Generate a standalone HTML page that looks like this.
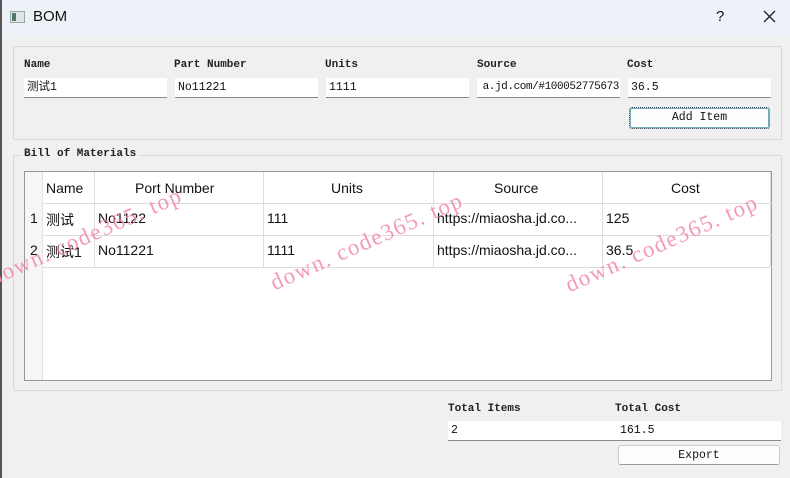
<!DOCTYPE html>
<html><head><meta charset="utf-8"><style>
*{box-sizing:border-box;margin:0;padding:0}
body{width:790px;height:478px;overflow:hidden;background:#f0f0f0;position:relative;font-family:"Liberation Mono","Noto Sans CJK SC",monospace;font-size:11px;color:#111}
.tb{position:absolute;left:0;top:0;width:790px;height:38px;background:#eef2f8}
.abs{position:absolute}
.lbl{position:absolute;font-size:11px;font-weight:bold;color:#222}
.in{position:absolute;height:20px;background:#fff;border-bottom:1px solid #888;padding-left:3px;line-height:19px;font-size:11.5px;white-space:nowrap;overflow:hidden}
.grp{position:absolute;border:1px solid #d8d8d8;border-radius:2px}
.btn{position:absolute;background:#fdfdfd;border:1px solid #ccc;border-bottom-color:#999;border-radius:3px;text-align:center;font-size:11.5px;line-height:19px}
.tbl{position:absolute;left:24px;top:171px;width:748px;height:210px;border:1px solid #999;background:#fff}
.cell{position:absolute;font-family:"Liberation Sans","Noto Sans CJK SC",sans-serif;font-size:14px;color:#111;white-space:nowrap}
.vl{position:absolute;top:0;width:1px;height:96px;background:#ddd}
.hl{position:absolute;left:17px;height:1px;width:730px;background:#ddd}
.wm{position:absolute;font-family:"Liberation Serif",serif;font-size:23px;color:#f28aa8;letter-spacing:1.5px;transform-origin:left bottom;transform:rotate(-24deg);white-space:nowrap;opacity:.85}
</style></head><body>
<div class="tb"></div>
<div class="abs" style="left:0;top:0;width:2px;height:478px;background:#555"></div>
<div class="abs" style="left:10px;top:11px;width:15px;height:12px;border:1px solid #9aa;background:#dfe6e6"></div>
<div class="abs" style="left:12px;top:13px;width:4px;height:8px;background:#576"></div>
<div class="abs" style="left:33px;top:8px;font-family:'Liberation Sans',sans-serif;font-size:15px">BOM</div>
<div class="abs" style="left:716px;top:8px;font-family:'Liberation Sans',sans-serif;font-size:15px">?</div>
<svg class="abs" style="left:763px;top:10px" width="13" height="13"><path d="M1 1L12 12M12 1L1 12" stroke="#222" stroke-width="1.3"/></svg>

<div class="grp" style="left:13px;top:46px;width:769px;height:94px"></div>
<div class="lbl" style="left:24px;top:59px">Name</div>
<div class="lbl" style="left:174px;top:59px">Part Number</div>
<div class="lbl" style="left:325px;top:59px">Units</div>
<div class="lbl" style="left:477px;top:59px">Source</div>
<div class="lbl" style="left:627px;top:59px">Cost</div>
<div class="in" style="left:24px;top:78px;width:143px">测试1</div>
<div class="in" style="left:175px;top:78px;width:143px">No11221</div>
<div class="in" style="left:326px;top:78px;width:143px">1111</div>
<div class="in" style="left:477px;top:78px;width:143px;padding-left:0;font-size:11px;letter-spacing:-0.4px;text-align:right;padding-right:1px">a.jd.com/#100052775673</div>
<div class="in" style="left:628px;top:78px;width:143px">36.5</div>
<div class="btn" style="left:629px;top:107px;width:141px;height:22px;border:1px dotted #234;border-radius:3px;box-shadow:inset 0 0 0 1px #7ab">Add Item</div>

<div class="grp" style="left:13px;top:155px;width:769px;height:236px"></div>
<div class="lbl" style="left:21px;top:148px;background:#f0f0f0;padding:0 3px">Bill of Materials</div>
<div class="tbl">
<div class="abs" style="left:0;top:0;width:17px;height:208px;background:#f6f6f6"></div>
<div class="vl" style="left:17px;height:208px;background:#e4e4e4"></div>
<div class="vl" style="left:69px"></div><div class="vl" style="left:238px"></div><div class="vl" style="left:408px"></div><div class="vl" style="left:577px"></div><div class="vl" style="left:745px"></div>
<div class="hl" style="top:31px"></div><div class="hl" style="top:63px"></div><div class="hl" style="top:95px"></div>
<div class="cell" style="left:21px;top:8px">Name</div>
<div class="cell" style="left:110px;top:8px">Port Number</div>
<div class="cell" style="left:306px;top:8px">Units</div>
<div class="cell" style="left:469px;top:8px">Source</div>
<div class="cell" style="left:646px;top:8px">Cost</div>
<div class="cell" style="left:5px;top:38px">1</div>
<div class="cell" style="left:21px;top:38px">测试</div>
<div class="cell" style="left:73px;top:38px">No1122</div>
<div class="cell" style="left:242px;top:38px">111</div>
<div class="cell" style="left:412px;top:38px">https://miaosha.jd.co...</div>
<div class="cell" style="left:581px;top:38px">125</div>
<div class="cell" style="left:5px;top:70px">2</div>
<div class="cell" style="left:21px;top:70px">测试1</div>
<div class="cell" style="left:73px;top:70px">No11221</div>
<div class="cell" style="left:242px;top:70px">1111</div>
<div class="cell" style="left:412px;top:70px">https://miaosha.jd.co...</div>
<div class="cell" style="left:581px;top:70px">36.5</div>
</div>

<div class="lbl" style="left:448px;top:403px">Total Items</div>
<div class="lbl" style="left:615px;top:403px">Total Cost</div>
<div class="in" style="left:448px;top:421px;width:195px">2</div>
<div class="in" style="left:617px;top:421px;width:164px">161.5</div>
<div class="btn" style="left:618px;top:445px;width:162px;height:20px">Export</div>

<div class="wm" style="left:-4px;top:265px">down. code365. top</div>
<div class="wm" style="left:277px;top:270px">down. code365. top</div>
<div class="wm" style="left:572px;top:272px">down. code365. top</div>
</body></html>
